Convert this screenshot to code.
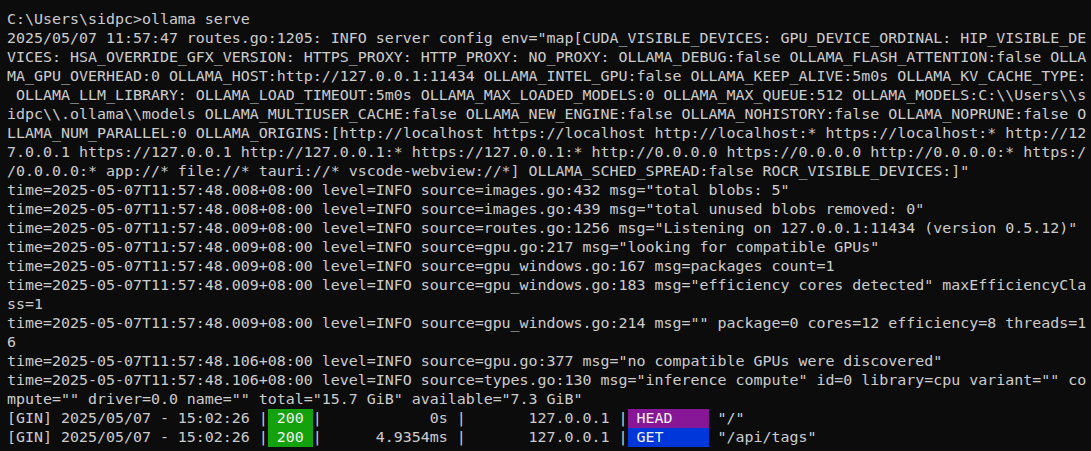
import React from "react";

type Seg = { text: string; className?: string };

const plain = (text: string): Seg[] => [{ text }];

const lines: Seg[][] = [
  plain("C:\\Users\\sidpc>ollama serve"),
  plain('2025/05/07 11:57:47 routes.go:1205: INFO server config env="map[CUDA_VISIBLE_DEVICES: GPU_DEVICE_ORDINAL: HIP_VISIBLE_DE'),
  plain("VICES: HSA_OVERRIDE_GFX_VERSION: HTTPS_PROXY: HTTP_PROXY: NO_PROXY: OLLAMA_DEBUG:false OLLAMA_FLASH_ATTENTION:false OLLA"),
  plain("MA_GPU_OVERHEAD:0 OLLAMA_HOST:http://127.0.0.1:11434 OLLAMA_INTEL_GPU:false OLLAMA_KEEP_ALIVE:5m0s OLLAMA_KV_CACHE_TYPE:"),
  plain(" OLLAMA_LLM_LIBRARY: OLLAMA_LOAD_TIMEOUT:5m0s OLLAMA_MAX_LOADED_MODELS:0 OLLAMA_MAX_QUEUE:512 OLLAMA_MODELS:C:\\\\Users\\\\s"),
  plain("idpc\\\\.ollama\\\\models OLLAMA_MULTIUSER_CACHE:false OLLAMA_NEW_ENGINE:false OLLAMA_NOHISTORY:false OLLAMA_NOPRUNE:false O"),
  plain("LLAMA_NUM_PARALLEL:0 OLLAMA_ORIGINS:[http://localhost https://localhost http://localhost:* https://localhost:* http://12"),
  plain("7.0.0.1 https://127.0.0.1 http://127.0.0.1:* https://127.0.0.1:* http://0.0.0.0 https://0.0.0.0 http://0.0.0.0:* https:/"),
  plain('/0.0.0.0:* app://* file://* tauri://* vscode-webview://*] OLLAMA_SCHED_SPREAD:false ROCR_VISIBLE_DEVICES:]"'),
  plain('time=2025-05-07T11:57:48.008+08:00 level=INFO source=images.go:432 msg="total blobs: 5"'),
  plain('time=2025-05-07T11:57:48.008+08:00 level=INFO source=images.go:439 msg="total unused blobs removed: 0"'),
  plain('time=2025-05-07T11:57:48.009+08:00 level=INFO source=routes.go:1256 msg="Listening on 127.0.0.1:11434 (version 0.5.12)"'),
  plain('time=2025-05-07T11:57:48.009+08:00 level=INFO source=gpu.go:217 msg="looking for compatible GPUs"'),
  plain("time=2025-05-07T11:57:48.009+08:00 level=INFO source=gpu_windows.go:167 msg=packages count=1"),
  plain('time=2025-05-07T11:57:48.009+08:00 level=INFO source=gpu_windows.go:183 msg="efficiency cores detected" maxEfficiencyCla'),
  plain("ss=1"),
  plain('time=2025-05-07T11:57:48.009+08:00 level=INFO source=gpu_windows.go:214 msg="" package=0 cores=12 efficiency=8 threads=1'),
  plain("6"),
  plain('time=2025-05-07T11:57:48.106+08:00 level=INFO source=gpu.go:377 msg="no compatible GPUs were discovered"'),
  plain('time=2025-05-07T11:57:48.106+08:00 level=INFO source=types.go:130 msg="inference compute" id=0 library=cpu variant="" co'),
  plain('mpute="" driver=0.0 name="" total="15.7 GiB" available="7.3 GiB"'),
  [
    { text: "[GIN] 2025/05/07 - 15:02:26 |" },
    { text: " 200 ", className: "bg-[#13a10e] text-[#f2f2f2]" },
    { text: "|            0s |       127.0.0.1 |" },
    { text: " HEAD    ", className: "bg-[#881798] text-[#f2f2f2]" },
    { text: ' "/"' },
  ],
  [
    { text: "[GIN] 2025/05/07 - 15:02:26 |" },
    { text: " 200 ", className: "bg-[#13a10e] text-[#f2f2f2]" },
    { text: "|      4.9354ms |       127.0.0.1 |" },
    { text: " GET     ", className: "bg-[#0037da] text-[#f2f2f2]" },
    { text: ' "/api/tags"' },
  ],
];

export default function App() {
  return (
    <div className="min-h-screen w-full bg-[#0c0c0c] text-[#cccccc] pt-[10px] pl-[7px] font-['DejaVu_Sans_Mono',monospace] text-[14.95px] overflow-hidden">
      {lines.map((segs, i) => (
        <div key={i} className="h-[19px] leading-[19px] whitespace-pre">
          {segs.map((s, j) =>
            s.className ? (
              <span key={j} className={`inline-block h-[19px] ${s.className}`}>
                {s.text}
              </span>
            ) : (
              <span key={j}>{s.text}</span>
            )
          )}
        </div>
      ))}
    </div>
  );
}
